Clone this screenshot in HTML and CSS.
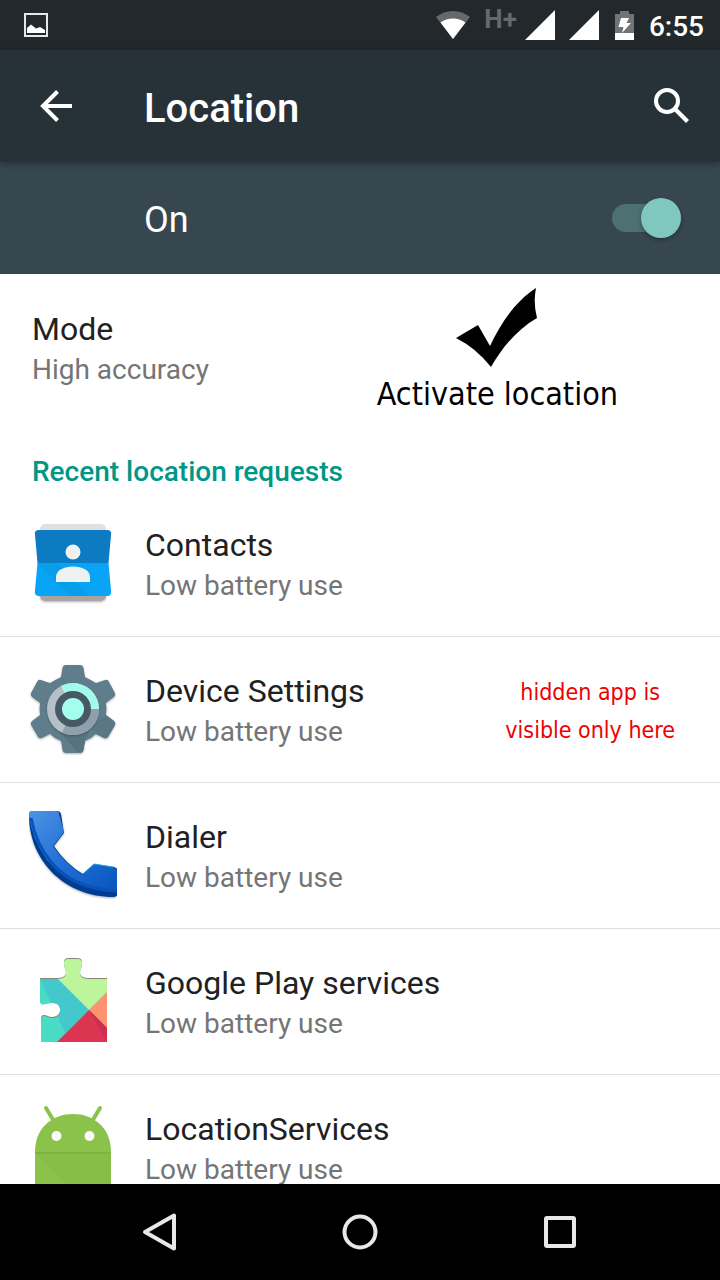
FILE: index.html
```html
<!DOCTYPE html>
<html lang="en">
<head>
<meta charset="utf-8">
<meta name="viewport" content="width=device-width, initial-scale=1">
<title>Location</title>
<link rel="stylesheet" href="styles.css">
</head>
<body>
<div class="status">
  <svg class="status-picture" width="24" height="24" viewBox="0 0 24 24"><rect x="1" y="1" width="22" height="22" fill="none" stroke="#e4e8e8" stroke-width="2"/><path d="M3 20V15L7 11.500L12 15.500L16 14L21 17V20Z" fill="#fff"/></svg>
  <div class="status-right">
    <svg class="wifi" width="34" height="29" viewBox="0 0 34 29"><path d="M0 6C10-2 24-2 34 6L17 28Z" fill="#66696c"/><path d="M4.500 11.500C12 6 22 6 29.500 11.500L17 28Z" fill="#fff"/></svg>
    <span class="network">H+</span>
    <svg class="signal" width="30" height="30" viewBox="0 0 30 30"><path d="M0 30L30 0V30Z" fill="#fff"/></svg>
    <svg class="signal signal-second" width="30" height="30" viewBox="0 0 30 30"><path d="M0 30L30 0V30Z" fill="#fff"/></svg>
    <svg class="battery" width="19" height="29" viewBox="0 0 19 29"><path d="M0 3H5V0H14V3H19V22H0Z" fill="#717477"/><path d="M0 22H19V29H0Z" fill="#fff"/><path d="M6 7H14L11.500 12H16L7 22L8.500 16H3.500Z" fill="#fff"/></svg>
    <span class="clock">6:55</span>
  </div>
</div>
<header class="appbar">
  <button class="icon-button" aria-label="Back"><svg width="34" height="34" viewBox="0 0 34 34"><path d="M33 17H4M18.500 2.500L4 17L18.500 31.500" fill="none" stroke="#fff" stroke-width="4"/></svg></button>
  <h1 class="title">Location</h1>
  <button class="icon-button" aria-label="Search"><svg width="36" height="36" viewBox="0 0 36 36"><circle cx="13" cy="13" r="11" fill="none" stroke="#fff" stroke-width="4"/><path d="M20 20L23 20L35 32L32 35L20 23Z" fill="#fff"/></svg></button>
</header>
<div class="switchbar">
  <label class="switch-label" for="location-on">On</label>
  <input class="switch" id="location-on" type="checkbox" role="switch" checked>
</div>
<main class="content">
  <section class="mode">
    <div class="text">
      <div class="name">Mode</div>
      <div class="detail">High accuracy</div>
    </div>
    <div class="activate">
      <svg width="82" height="80" viewBox="0 0 82 80"><path d="M0 50L22 37L34 58C46 33 60 13 80 0Q77 15 81 30C62 41 47 58 35 79Q20 60 0 50Z" fill="#000"/></svg>
      <span>Activate location</span>
    </div>
  </section>
  <h2 class="heading">Recent location requests</h2>
  <ul class="apps">
    <li class="row">
      <svg class="app-icon" width="88" height="88" viewBox="0 0 88 88">
        <defs><filter id="shadow" x="-10%" y="-10%" width="120%" height="125%"><feDropShadow dx="0" dy="1" stdDeviation="1" flood-opacity=".3"/></filter></defs>
        <rect x="11" y="5" width="66" height="20" rx="5" fill="#dfe1e1"/><rect x="11" y="63" width="66" height="19" rx="5" fill="#aaa3a3" filter="url(#shadow)"/>
        <path d="M10 11H78Q83 11 82 16L79.500 44H8.500L6 16Q5 11 10 11Z" fill="#0d7bc1"/>
        <path d="M8.500 44H79.500L82 71Q83 77 78 77H10Q5 77 6 71Z" fill="#09a4f5"/>
        <path d="M8.500 44H28L60 77H42Z" fill="#089de9"/>
        <circle cx="44" cy="33" r="7.500" fill="#f0f1f1"/><path d="M27 63V58C27 44 61 44 61 58V63Z" fill="#f0f1f1"/>
      </svg>
      <div class="text"><div class="name">Contacts</div><div class="detail">Low battery use</div></div>
    </li>
    <li class="row">
      <svg class="app-icon" width="88" height="92" viewBox="0 0 88 92">
        <path d="M37 2H51Q54 2 54.500 5L56 14Q62 17 67 20L76 17Q78 16 79.500 18L86 30Q87 32 85 34L77 40Q78 46 77 52L85 58Q87 60 86 62L79 74Q78 76 75 75L67 71Q62 76 56 78L54.500 87Q54 90 51 90H37Q34 90 33.500 87L32 78Q26 76 21 71L13 75Q10 76 9 74L2 62Q1 60 3 58L11 52Q10 46 11 40L3 34Q1 32 2 30L8.500 18Q10 16 12 17L21 20Q26 17 32 14L33.500 5Q34 2 37 2Z" fill="#607d8b" filter="url(#shadow)"/>
        <path d="M62 64L77 52L85 58Q87 60 86 62L79 74Q77 76 75 75L67 71Z" fill="#5c7784"/>
        <path d="M26 64L49 89.500H51Q54 90 54.500 87L56 78L62 64Z" fill="#58737f"/>
        <circle cx="44" cy="46" r="26" fill="#b5c0c8" filter="url(#shadow)"/>
        <path d="M44 46L33 69.500A26 26 0 0 0 70 46Z" fill="#90a0aa"/>
        <path d="M44 46L32 23A26 26 0 0 1 70 46Z" fill="#a4faea"/>
        <circle cx="44" cy="46" r="18" fill="#455a64"/><circle cx="44" cy="46" r="11" fill="#a3ffec"/>
      </svg>
      <div class="text"><div class="name">Device Settings</div><div class="detail">Low battery use</div></div>
      <p class="hint">hidden app is<br>visible only here</p>
    </li>
    <li class="row">
      <svg class="app-icon" width="88" height="88" viewBox="1 1 88 88">
        <defs><linearGradient id="phone" x1="0" y1="0" x2="1" y2="1"><stop offset="0" stop-color="#4d93e5"/><stop offset=".45" stop-color="#2672d7"/><stop offset="1" stop-color="#0755bd"/></linearGradient></defs>
        <path d="M4 1H29Q32 1 33 4L36 23L26 36Q38 54 55 64L66 54L86 57Q90 58 90 62V82Q90 87 85 87C38 87 1 52 1 5Q1 1 4 1Z" fill="#003e91" filter="url(#shadow)"/>
        <path d="M4 1H28Q31 1 31 4L36 22L25 36Q37 54 55 65L66 54L85 57Q89 58 89 62V81Q45 82 19 50Q4 29 1 5Q1 1 4 1Z" fill="url(#phone)"/>
        <path d="M3 8Q8 34 23 52Q46 79 89 81" fill="none" stroke="#0753bb" stroke-width="3"/>
        <path d="M55 64L66 54L85 57" fill="none" stroke="#22a8f0" stroke-width="1"/>
      </svg>
      <div class="text"><div class="name">Dialer</div><div class="detail">Low battery use</div></div>
    </li>
    <li class="row">
      <svg class="app-icon" width="88" height="88" viewBox="0 0 88 88">
        <defs>
          <path id="piece" d="M11 22H28Q38 22 37 15Q35 9 35 6Q35 2 40 2H48Q53 2 53 6Q53 9 51 15Q50 22 60 22H78V85H12V61C14 57 18 60 22 61C34 62 34 46 24 46C18 46 12 50 11 45Z"/>
          <clipPath id="puzzle"><use href="#piece"/></clipPath>
        </defs>
        <use href="#piece" y="-1" fill="#8b8277"/>
        <g clip-path="url(#puzzle)"><path d="M0 0H90V90H0Z" fill="#4adbc6"/><path d="M10 20H34L60 53L36 76Z" fill="#43c9cb"/><path d="M28 0H88V25L60 53L28 21Z" fill="#bdf59d"/><path d="M60 53L88 25V81Z" fill="#ff936f"/><path d="M60 53L95 88H25Z" fill="#da3651"/><path d="M60 53L78 71V85Z" fill="#cf2f4e"/></g>
      </svg>
      <div class="text"><div class="name">Google Play services</div><div class="detail">Low battery use</div></div>
    </li>
    <li class="row">
      <svg class="app-icon" width="88" height="88" viewBox="0 0 88 88">
        <path d="M17 5L26 20M71 5L62 20" stroke="#8bc34a" stroke-width="4" stroke-linecap="round"/>
        <path d="M6 49C6 24 24 11 44 11S82 24 82 49V82Q82 84 79 84H9Q6 84 6 82Z" fill="#8bc34a"/>
        <path d="M6 49L40 84H80Q82 84 82 82V49Z" fill="#86be46"/><path d="M6 50H82" stroke="#75aa3c" stroke-width="1"/>
        <circle cx="27.500" cy="33" r="5" fill="#fafafa"/><circle cx="60.500" cy="33" r="5" fill="#fafafa"/>
      </svg>
      <div class="text"><div class="name">LocationServices</div><div class="detail">Low battery use</div></div>
    </li>
  </ul>
</main>
<nav class="navbar">
  <button class="icon-button" aria-label="Back"><svg width="40" height="40" viewBox="0 0 40 40"><path d="M5 20L34 3.500V36.500Z" fill="none" stroke="#e8e8e8" stroke-width="4" stroke-linejoin="round"/></svg></button>
  <button class="icon-button" aria-label="Home"><svg width="40" height="40" viewBox="0 0 40 40"><circle cx="20" cy="20" r="15.500" fill="none" stroke="#e8e8e8" stroke-width="4"/></svg></button>
  <button class="icon-button" aria-label="Recent apps"><svg width="40" height="40" viewBox="0 0 40 40"><rect x="6" y="6" width="28" height="28" rx="1" fill="none" stroke="#e8e8e8" stroke-width="4" stroke-linejoin="round"/></svg></button>
</nav>
</body>
</html>
```

FILE: styles.css
```css
* { box-sizing: border-box; }

body {
  margin: 0;
  height: 100vh;
  display: flex;
  flex-direction: column;
  overflow: hidden;
  background: #fff;
  color: #212121;
  font-family: Roboto, "Liberation Sans", sans-serif;
}

svg { display: block; flex: none; }

.icon-button {
  display: flex;
  padding: 0;
  border: 0;
  background: none;
}

.status {
  flex: none;
  height: 50px;
  padding: 0 16px 0 24px;
  display: flex;
  align-items: center;
  justify-content: space-between;
  background: #22282b;
  color: #fff;
}

.status-right { display: flex; align-items: center; }

.network {
  margin: 0 8px 12px 14px;
  color: #66696c;
  font-size: 26px;
  font-weight: 700;
  line-height: 26px;
}

.signal-second { margin-left: 14px; }
.battery { margin: 0 15px 0 16px; }
.clock { padding-top: 3px; font-size: 28px; font-weight: 500; line-height: 32px; }

.appbar {
  flex: none;
  height: 112px;
  padding: 0 30px 0 39px;
  display: flex;
  align-items: center;
  background: #273238;
  color: #fff;
  position: relative;
  box-shadow: 0 2px 6px rgba(0, 0, 0, .3);
}

.title {
  flex: 1;
  margin: 0;
  padding: 6px 0 0 71px;
  font-size: 40px;
  font-weight: 500;
  line-height: 48px;
}

.switchbar {
  flex: none;
  height: 112px;
  padding: 0 39px 0 144px;
  display: flex;
  align-items: center;
  justify-content: space-between;
  background: #37474f;
  color: #fff;
}

.switch-label { padding-top: 4px; font-size: 36px; line-height: 44px; }

.switch {
  appearance: none;
  margin: 0;
  width: 69px;
  height: 28px;
  border-radius: 14px;
  background: #4d7072;
  display: flex;
  align-items: center;
  justify-content: flex-end;
}

.switch::before {
  content: "";
  width: 40px;
  height: 40px;
  border-radius: 50%;
  background: #7fc7bf;
  box-shadow: 0 2px 4px rgba(0, 0, 0, .3);
}

.content { flex: 1; min-height: 0; overflow: hidden; }

.mode {
  padding: 0 102px 0 32px;
  display: flex;
  align-items: flex-start;
  justify-content: space-between;
}

.text { padding: 35px 0 30px; white-space: nowrap; }
.name { font-size: 32px; line-height: 40px; }
.detail { color: #757575; font-size: 28px; line-height: 41px; }

.activate {
  padding-top: 14px;
  display: flex;
  flex-direction: column;
  align-items: center;
  gap: 6px;
  color: #000;
  font-family: "DejaVu Sans Condensed", "DejaVu Sans", sans-serif;
  font-stretch: condensed;
  font-size: 32px;
  line-height: 40px;
}

.heading {
  margin: 0;
  padding: 34px 32px 0;
  color: #009688;
  font-size: 28px;
  font-weight: 500;
  line-height: 36px;
}

.apps { margin: 0; padding: 0; list-style: none; }

.row {
  height: 146px;
  padding: 0 45px 0 29px;
  display: flex;
  align-items: center;
  gap: 28px;
}

.row + .row { box-shadow: inset 0 1px #dedede; }

.hint {
  margin: 0 0 0 auto;
  padding-top: 3px;
  color: #f00000;
  font-family: "DejaVu Sans Condensed", "DejaVu Sans", sans-serif;
  font-stretch: condensed;
  font-size: 23px;
  line-height: 38px;
  text-align: center;
}

.navbar {
  flex: none;
  height: 96px;
  padding: 0 140px;
  display: flex;
  align-items: center;
  justify-content: space-between;
  background: #000;
}
```
